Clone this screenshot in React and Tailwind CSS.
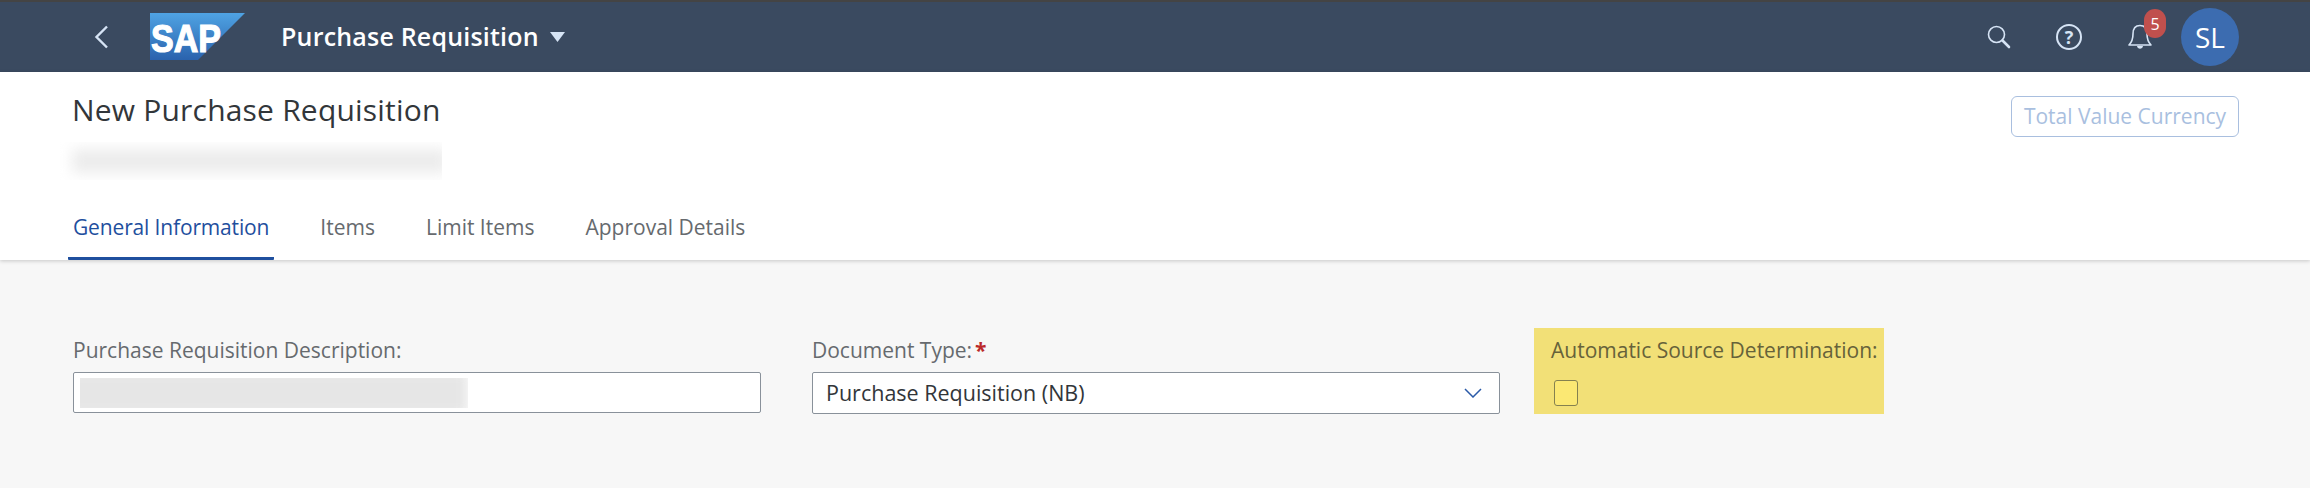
import React from 'react';

const font = { fontFamily: '"Open Sans", "Liberation Sans", sans-serif' };

const SapLogo = () => (
  <svg width="96" height="48" viewBox="0 0 96 48" className="shrink-0">
    <defs>
      <linearGradient id="sapBlue" x1="0" y1="0" x2="0" y2="1">
        <stop offset="0" stopColor="#4fa3e3" />
        <stop offset="1" stopColor="#2a62ad" />
      </linearGradient>
    </defs>
    <polygon points="0,0 95,0 48,47 0,47" fill="url(#sapBlue)" />
    <text x="1" y="39" fontFamily="Liberation Sans, sans-serif" fontWeight="700" fontSize="38" fill="#fff" textLength="70" lengthAdjust="spacingAndGlyphs" stroke="#fff" strokeWidth="1.2">SAP</text>
  </svg>
);

const SearchIcon = () => (
  <svg width="24" height="24" viewBox="0 0 24 24" fill="none" stroke="#d6e4f5" strokeWidth="1.6">
    <circle cx="9.5" cy="9.5" r="8" />
    <path d="M15.5 15.5 L22 22" strokeWidth="2.6" strokeLinecap="round" />
  </svg>
);

const HelpIcon = () => (
  <div className="w-[26px] h-[26px] rounded-full border-2 border-[#d6e4f5] flex items-center justify-center text-[#d6e4f5] text-[18px] font-bold leading-none">?</div>
);

const BellIcon = () => (
  <svg width="24" height="26" viewBox="0 0 24 26" fill="none" stroke="#d6e4f5" strokeWidth="1.6" strokeLinejoin="round">
    <path d="M12 1.5 C7 1.5 5 5.5 5 10 C5 15 4 18 1 21 H23 C20 18 19 15 19 10 C19 5.5 17 1.5 12 1.5 Z" />
    <path d="M9 22 C9.5 25.5 14.5 25.5 15 22 Z" fill="#d6e4f5" stroke="none" />
  </svg>
);

const Blurred = ({ className, bar }) => (
  <div className={`overflow-hidden ${className}`}>
    <div className={bar} />
  </div>
);

const TABS = ['General Information', 'Items', 'Limit Items', 'Approval Details'];

const App = () => {
  return (
    <div className="min-h-[488px] flex flex-col bg-[#f7f7f7]" style={font}>
      <header className="h-[72px] shrink-0 bg-[#3a4a60] border-t-2 border-[#444444] flex items-center pl-[93px] pr-[71px]">
        <svg width="18" height="24" viewBox="0 0 18 24" fill="none" stroke="#d6e4f5" strokeWidth="2.4" className="shrink-0">
          <path d="M14 1.5 L3.5 12 L14 22.5" />
        </svg>
        <div className="ml-[39px]"><SapLogo /></div>
        <div className="ml-[35px] text-white text-[25px] font-semibold tracking-[0.2px] whitespace-nowrap">Purchase Requisition</div>
        <svg width="15" height="10" viewBox="0 0 15 10" className="ml-[11px] mt-[-1px]">
          <polygon points="0,0 15,0 7.5,10" fill="#d6e4f5" />
        </svg>
        <div className="ml-auto flex items-center">
          <SearchIcon />
          <div className="ml-[45px]"><HelpIcon /></div>
          <div className="relative ml-[46px]">
            <BellIcon />
            <div className="absolute left-[16px] top-[-15px] w-[22px] h-[29px] rounded-[11px] bg-[#c0504d] text-white text-[16px] flex items-center justify-center">5</div>
          </div>
          <div className="ml-[29px] w-[58px] h-[58px] rounded-full bg-[#3c6cb0] text-white text-[28px] flex items-center justify-center">SL</div>
        </div>
      </header>

      <section className="h-[188px] shrink-0 bg-white shadow-[0_1px_4px_rgba(0,0,0,0.2)] flex flex-col pl-[73px] pr-[71px] relative">
        <div className="flex items-start justify-between">
          <div className="mt-[16px] flex flex-col">
            <h1 className="ml-[-1px] text-[#32363a] text-[30px] leading-[44px] tracking-[0.2px] whitespace-nowrap">New Purchase Requisition</h1>
            <Blurred className="ml-[-13px] mt-[10px] w-[382px] h-[38px] flex items-center" bar="ml-[12px] w-[375px] h-[24px] shrink-0 bg-[#ececec] blur-[7px]" />
          </div>
          <button className="mt-[24px] w-[228px] h-[41px] rounded-[6px] border-[1.5px] border-[#a9bfdf] text-[#a9bfdf] text-[21px] whitespace-nowrap">Total Value Currency</button>
        </div>
        <nav className="mt-auto flex items-end gap-[41px] ml-[-5px]">
          {TABS.map((tab, i) => (
            <div
              key={tab}
              className={`h-[49px] px-[5px] pt-[1px] text-[21px] whitespace-nowrap leading-[30px] ${i === 0 ? 'tracking-[-0.15px] text-[#1f4f9e] border-b-[3px] border-[#1f4f9e] rounded-b-[1px]' : 'text-[#666a6e]'}`}
            >
              {tab}
            </div>
          ))}
        </nav>
      </section>

      <main className="pl-[73px] pt-[68px] flex items-start">
        <div className="w-[688px] pt-[8px]">
          <label className="block text-[#666a6e] text-[21px] leading-[28px] whitespace-nowrap">Purchase Requisition Description:</label>
          <div className="mt-[8px] h-[41px] bg-white border border-[#89919a] rounded-[2px] pl-[6px] pt-[5px]">
            <Blurred className="w-[388px] h-[30px] flex items-center" bar="ml-[-12px] w-[400px] h-[44px] shrink-0 bg-[#e6e6e6] blur-[6px]" />
          </div>
        </div>

        <div className="ml-[51px] w-[688px] pt-[8px]">
          <label className="block text-[#666a6e] text-[21px] leading-[28px] whitespace-nowrap">
            Document Type:<span className="ml-[3px] text-[#bb2a2a] font-bold">*</span>
          </label>
          <div className="mt-[8px] h-[42px] bg-white border border-[#89919a] rounded-[2px] pl-[13px] pr-[17px] flex items-center justify-between">
            <span className="text-[#32363a] text-[21.5px] whitespace-nowrap">Purchase Requisition (NB)</span>
            <svg width="18" height="10" viewBox="0 0 18 10" fill="none" stroke="#2a5aa8" strokeWidth="1.5">
              <path d="M1 1 L9 9 L17 1" />
            </svg>
          </div>
        </div>

        <div className="ml-[34px] w-[350px] h-[86px] bg-[#f2e077] pl-[17px] pt-[8px]">
          <label className="block text-[#66623a] text-[21px] leading-[28px] whitespace-nowrap">Automatic Source Determination:</label>
          <div className="mt-[16px] ml-[3px] w-[24px] h-[26px] rounded-[3px] border-[1.5px] border-[#85814f] bg-[#fbe873]" />
        </div>
      </main>
    </div>
  );
};

export default App;
